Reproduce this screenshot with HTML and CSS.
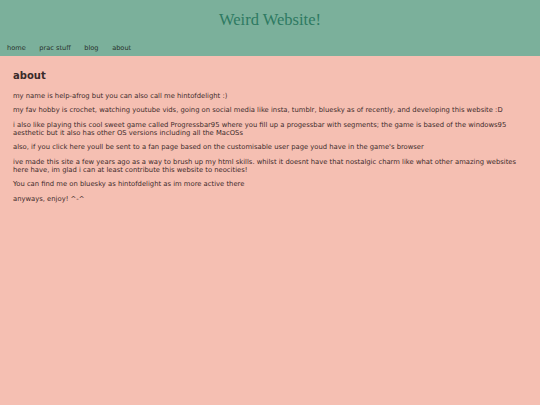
FILE: index.html
```html
<!DOCTYPE html>
<html>
<head>
<meta charset="utf-8">
<link rel="stylesheet" href="styles.css">
</head>
<body>
<header class="site-header">
  <h1 class="site-title">Weird Website!</h1>
  <nav class="site-nav">
    <a href="#">home</a>
    <a href="#">prac stuff</a>
    <a href="#">blog</a>
    <a href="#">about</a>
  </nav>
</header>
<main class="content">
  <h2 class="page-title">about</h2>
  <p>my name is help-afrog but you can also call me hintofdelight :)</p>
  <p>my fav hobby is crochet, watching youtube vids, going on social media like insta, tumblr, bluesky as of recently, and developing this website :D</p>
  <p>i also like playing this cool sweet game called Progressbar95 where you fill up a progessbar with segments; the game is based of the windows95 aesthetic but it also has other OS versions including all the MacOSs</p>
  <p>also, if you click here youll be sent to a fan page based on the customisable user page youd have in the game's browser</p>
  <p>ive made this site a few years ago as a way to brush up my html skills. whilst it doesnt have that nostalgic charm like what other amazing websites here have, im glad i can at least contribute this website to neocities!</p>
  <p>You can find me on bluesky as hintofdelight as im more active there</p>
  <p>anyways, enjoy! ^-^</p>
</main>
</body>
</html>
```
FILE: styles.css
```css
html, body {
  margin: 0;
  padding: 0;
  height: 100%;
}
body {
  background: #f5bfb2;
  font-family: "DejaVu Sans", Verdana, sans-serif;
  color: #3d2b2b;
}
.site-header {
  background: #7bb09b;
  height: 56px;
  display: flex;
  flex-direction: column;
}
.site-title {
  margin: 0;
  padding-top: 9.5px;
  text-align: center;
  font-family: "Liberation Serif", "Times New Roman", serif;
  font-weight: normal;
  font-size: 16.5px;
  line-height: 20px;
  color: #2e7a62;
}
.site-nav {
  margin-top: auto;
  padding: 0 0 4px 7px;
  display: flex;
  gap: 13.6px;
}
.site-nav a {
  font-size: 6.6px;
  color: #28302c;
  text-decoration: none;
  line-height: 8px;
}
.content {
  padding: 14px 13px 0 13px;
}
.page-title {
  margin: 0 0 10px 0;
  font-size: 10px;
  line-height: 12px;
  font-weight: bold;
  color: #3a2a2a;
}
.content p {
  margin: 0 0 5.8px 0;
  font-size: 6.8px;
  line-height: 8.5px;
}
```
